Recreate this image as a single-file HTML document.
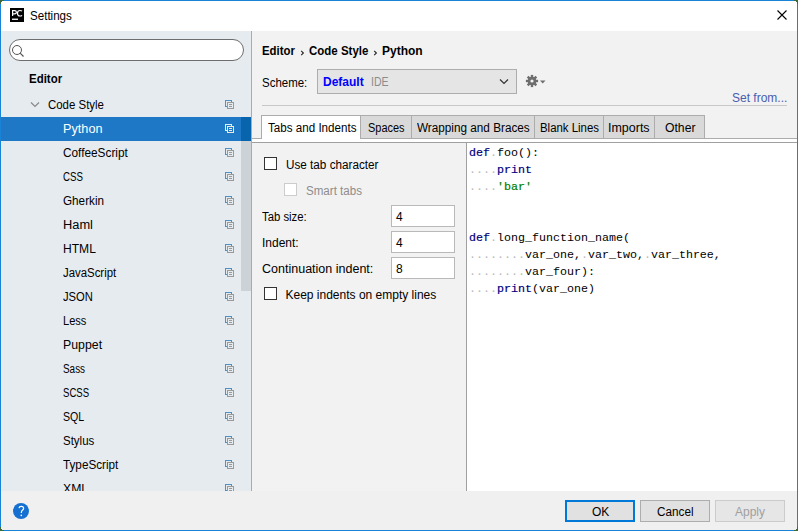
<!DOCTYPE html>
<html><head><meta charset="utf-8">
<style>
*{margin:0;padding:0;box-sizing:border-box}
html,body{width:798px;height:531px;overflow:hidden;background:#fff}
body{position:relative;font-family:"Liberation Sans",sans-serif;font-size:12px;color:#000}
.a{position:absolute;white-space:pre}
#win{position:absolute;left:0;top:0;width:798px;height:531px;border:1px solid #1883D7;background:#fff}
#side{position:absolute;left:1px;top:31px;width:250px;height:460px;background:#E6EBF0;overflow:hidden}
#divider{position:absolute;left:251px;top:31px;width:1px;height:460px;background:#ABABAB}
#right{position:absolute;left:252px;top:31px;width:545px;height:460px;background:#F2F2F2}
#bottom{position:absolute;left:1px;top:491px;width:796px;height:39px;background:#F0F0F0}
.row{position:absolute;left:0;width:250px;height:24px}
.row .t{position:absolute;left:62px;top:5px;white-space:pre}
.copy{position:absolute;left:223px;top:7px;width:11px;height:11px}
.btn{position:absolute;top:500px;height:22px;width:70px;border:1px solid #ADADAD;background:#E1E1E1}
.tab{position:absolute;top:115px;height:23px;border:1px solid #ACACAC;border-bottom:none;background:#D9D9D9}
.code{position:absolute;font-family:"Liberation Mono",monospace;font-size:11.67px;white-space:pre;color:#000}
.kw{color:#000080;-webkit-text-stroke:0.2px #000080}
.str{color:#008000;-webkit-text-stroke:0.2px #008000}
.dot{color:#B8B8B8}
.cb{position:absolute;width:13px;height:13px;border:1px solid #333;background:#fff}
.inp{position:absolute;left:391px;width:64px;height:22px;border:1px solid #B9B9B9;background:#fff}
</style></head><body>
<div id="win"></div>
<svg class="a" style="left:10px;top:8px" width="14" height="14" viewBox="0 0 14 14"><rect width="14" height="14" fill="#000"/><path d="M2.6 8V2.6H4.6Q6.4 2.6 6.4 4.2Q6.4 5.8 4.6 5.8H2.6" fill="none" stroke="#fff" stroke-width="1.2"/><path d="M12 3.2Q11.3 2.5 10 2.5Q7.5 2.5 7.5 5.2Q7.5 8 10 8Q11.3 8 12 7.3" fill="none" stroke="#fff" stroke-width="1.2"/><rect x="2" y="10.6" width="6" height="1.3" fill="#fff"/></svg>
<div class="a" style="left:30px;top:9px;transform:scaleX(0.9651);transform-origin:0 0;">Settings</div>
<svg class="a" style="left:776px;top:9px" width="14" height="14" viewBox="0 0 14 14"><path d="M1.5 1.5L10.5 10.5M10.5 1.5L1.5 10.5" stroke="#000" stroke-width="1.1"/></svg>

<div id="side">
  <div class="a" style="left:8px;top:8px;width:235px;height:22px;border:1px solid #6E6E6E;border-radius:11px;background:#fff"></div>
  <svg class="a" style="left:10px;top:13px" width="14" height="14" viewBox="0 0 14 14"><circle cx="6" cy="6" r="4.5" fill="none" stroke="#555" stroke-width="1"/><path d="M9.2 9.2L12.5 12.5" stroke="#555" stroke-width="1.2"/></svg>
  <div class="a" style="left:27.5px;top:41px;font-weight:bold;transform:scaleX(0.955);transform-origin:0 0">Editor</div>
  <div class="row" style="top:62px">
    <svg class="a" style="left:29px;top:8px" width="10" height="7" viewBox="0 0 10 7"><path d="M1 1.5L5 5.5L9 1.5" fill="none" stroke="#888" stroke-width="1.2"/></svg>
    <div class="t" style="left:46.5px;transform:scaleX(0.953);transform-origin:0 0">Code Style</div>
    <svg class="copy" viewBox="0 0 11 11"><rect x="1.5" y="0.5" width="6" height="6" fill="none" stroke="#4D90C4"/><rect x="3.5" y="2.5" width="6" height="6" fill="#E6EBF0" stroke="#9A9A9A"/><path d="M5 4.5h3M5 6.5h3" stroke="#9A9A9A"/></svg>
  </div>
  <div class="row" style="top:86px;background:#1E78C6;color:#fff">
    <div class="t" style="transform:scaleX(1.057);transform-origin:0 0">Python</div>
    <svg class="copy" viewBox="0 0 11 11"><rect x="1.5" y="0.5" width="6" height="6" fill="none" stroke="#D8F0FF"/><rect x="3.5" y="2.5" width="6" height="6" fill="#1E78C6" stroke="#F4E6DA"/><path d="M5 4.5h3M5 6.5h3" stroke="#F4E6DA"/></svg>
  </div>
  <div class="row" style="top:110px"><div class="t" style="left:61.8px;transform:scaleX(0.9846);transform-origin:0 0">CoffeeScript</div><svg class="copy" viewBox="0 0 11 11"><rect x="1.5" y="0.5" width="6" height="6" fill="none" stroke="#4D90C4"/><rect x="3.5" y="2.5" width="6" height="6" fill="#E6EBF0" stroke="#9A9A9A"/><path d="M5 4.5h3M5 6.5h3" stroke="#9A9A9A"/></svg></div>
  <div class="row" style="top:134px"><div class="t" style="left:61.8px;transform:scaleX(0.8083);transform-origin:0 0">CSS</div><svg class="copy" viewBox="0 0 11 11"><rect x="1.5" y="0.5" width="6" height="6" fill="none" stroke="#4D90C4"/><rect x="3.5" y="2.5" width="6" height="6" fill="#E6EBF0" stroke="#9A9A9A"/><path d="M5 4.5h3M5 6.5h3" stroke="#9A9A9A"/></svg></div>
  <div class="row" style="top:158px"><div class="t" style="left:61.8px;transform:scaleX(0.9756);transform-origin:0 0">Gherkin</div><svg class="copy" viewBox="0 0 11 11"><rect x="1.5" y="0.5" width="6" height="6" fill="none" stroke="#4D90C4"/><rect x="3.5" y="2.5" width="6" height="6" fill="#E6EBF0" stroke="#9A9A9A"/><path d="M5 4.5h3M5 6.5h3" stroke="#9A9A9A"/></svg></div>
  <div class="row" style="top:182px"><div class="t" style="left:61.8px;transform:scaleX(1.0692);transform-origin:0 0">Haml</div><svg class="copy" viewBox="0 0 11 11"><rect x="1.5" y="0.5" width="6" height="6" fill="none" stroke="#4D90C4"/><rect x="3.5" y="2.5" width="6" height="6" fill="#E6EBF0" stroke="#9A9A9A"/><path d="M5 4.5h3M5 6.5h3" stroke="#9A9A9A"/></svg></div>
  <div class="row" style="top:206px"><div class="t" style="left:61.8px;transform:scaleX(1.0065);transform-origin:0 0">HTML</div><svg class="copy" viewBox="0 0 11 11"><rect x="1.5" y="0.5" width="6" height="6" fill="none" stroke="#4D90C4"/><rect x="3.5" y="2.5" width="6" height="6" fill="#E6EBF0" stroke="#9A9A9A"/><path d="M5 4.5h3M5 6.5h3" stroke="#9A9A9A"/></svg></div>
  <div class="row" style="top:230px"><div class="t" style="left:61.8px;transform:scaleX(0.9491);transform-origin:0 0">JavaScript</div><svg class="copy" viewBox="0 0 11 11"><rect x="1.5" y="0.5" width="6" height="6" fill="none" stroke="#4D90C4"/><rect x="3.5" y="2.5" width="6" height="6" fill="#E6EBF0" stroke="#9A9A9A"/><path d="M5 4.5h3M5 6.5h3" stroke="#9A9A9A"/></svg></div>
  <div class="row" style="top:254px"><div class="t" style="left:61.8px;transform:scaleX(0.9333);transform-origin:0 0">JSON</div><svg class="copy" viewBox="0 0 11 11"><rect x="1.5" y="0.5" width="6" height="6" fill="none" stroke="#4D90C4"/><rect x="3.5" y="2.5" width="6" height="6" fill="#E6EBF0" stroke="#9A9A9A"/><path d="M5 4.5h3M5 6.5h3" stroke="#9A9A9A"/></svg></div>
  <div class="row" style="top:278px"><div class="t" style="left:61.8px;transform:scaleX(0.9217);transform-origin:0 0">Less</div><svg class="copy" viewBox="0 0 11 11"><rect x="1.5" y="0.5" width="6" height="6" fill="none" stroke="#4D90C4"/><rect x="3.5" y="2.5" width="6" height="6" fill="#E6EBF0" stroke="#9A9A9A"/><path d="M5 4.5h3M5 6.5h3" stroke="#9A9A9A"/></svg></div>
  <div class="row" style="top:302px"><div class="t" style="left:61.8px;transform:scaleX(1.0278);transform-origin:0 0">Puppet</div><svg class="copy" viewBox="0 0 11 11"><rect x="1.5" y="0.5" width="6" height="6" fill="none" stroke="#4D90C4"/><rect x="3.5" y="2.5" width="6" height="6" fill="#E6EBF0" stroke="#9A9A9A"/><path d="M5 4.5h3M5 6.5h3" stroke="#9A9A9A"/></svg></div>
  <div class="row" style="top:326px"><div class="t" style="left:61.8px;transform:scaleX(0.8269);transform-origin:0 0">Sass</div><svg class="copy" viewBox="0 0 11 11"><rect x="1.5" y="0.5" width="6" height="6" fill="none" stroke="#4D90C4"/><rect x="3.5" y="2.5" width="6" height="6" fill="#E6EBF0" stroke="#9A9A9A"/><path d="M5 4.5h3M5 6.5h3" stroke="#9A9A9A"/></svg></div>
  <div class="row" style="top:350px"><div class="t" style="left:61.8px;transform:scaleX(0.8000);transform-origin:0 0">SCSS</div><svg class="copy" viewBox="0 0 11 11"><rect x="1.5" y="0.5" width="6" height="6" fill="none" stroke="#4D90C4"/><rect x="3.5" y="2.5" width="6" height="6" fill="#E6EBF0" stroke="#9A9A9A"/><path d="M5 4.5h3M5 6.5h3" stroke="#9A9A9A"/></svg></div>
  <div class="row" style="top:374px"><div class="t" style="left:61.8px;transform:scaleX(0.8826);transform-origin:0 0">SQL</div><svg class="copy" viewBox="0 0 11 11"><rect x="1.5" y="0.5" width="6" height="6" fill="none" stroke="#4D90C4"/><rect x="3.5" y="2.5" width="6" height="6" fill="#E6EBF0" stroke="#9A9A9A"/><path d="M5 4.5h3M5 6.5h3" stroke="#9A9A9A"/></svg></div>
  <div class="row" style="top:398px"><div class="t" style="left:61.8px;transform:scaleX(0.9563);transform-origin:0 0">Stylus</div><svg class="copy" viewBox="0 0 11 11"><rect x="1.5" y="0.5" width="6" height="6" fill="none" stroke="#4D90C4"/><rect x="3.5" y="2.5" width="6" height="6" fill="#E6EBF0" stroke="#9A9A9A"/><path d="M5 4.5h3M5 6.5h3" stroke="#9A9A9A"/></svg></div>
  <div class="row" style="top:422px"><div class="t" style="left:61.8px;transform:scaleX(0.9768);transform-origin:0 0">TypeScript</div><svg class="copy" viewBox="0 0 11 11"><rect x="1.5" y="0.5" width="6" height="6" fill="none" stroke="#4D90C4"/><rect x="3.5" y="2.5" width="6" height="6" fill="#E6EBF0" stroke="#9A9A9A"/><path d="M5 4.5h3M5 6.5h3" stroke="#9A9A9A"/></svg></div>
  <div class="row" style="top:446px"><div class="t" style="left:61.8px;transform:scaleX(1.0200);transform-origin:0 0">XML</div><svg class="copy" viewBox="0 0 11 11"><rect x="1.5" y="0.5" width="6" height="6" fill="none" stroke="#4D90C4"/><rect x="3.5" y="2.5" width="6" height="6" fill="#E6EBF0" stroke="#9A9A9A"/><path d="M5 4.5h3M5 6.5h3" stroke="#9A9A9A"/></svg></div>
  <div class="a" style="left:240px;top:86px;width:10px;height:174px;background:#CDD2D7"></div>
  <div class="a" style="left:240px;top:86px;width:10px;height:24px;background:#0864AC"></div>
</div>
<div id="divider"></div>

<div id="right"></div>
<div class="a" style="left:262px;top:44px;transform:scaleX(0.9471);transform-origin:0 0;font-weight:bold">Editor</div>
<svg class="a" style="left:300px;top:49.5px" width="5" height="6" viewBox="0 0 5 6"><path d="M1.2 0.8L3.4 3L1.2 5.2" fill="none" stroke="#222" stroke-width="1.1"/></svg>
<div class="a" style="left:309px;top:44px;transform:scaleX(0.9576);transform-origin:0 0;font-weight:bold">Code Style</div>
<svg class="a" style="left:372.5px;top:49.5px" width="5" height="6" viewBox="0 0 5 6"><path d="M1.2 0.8L3.4 3L1.2 5.2" fill="none" stroke="#222" stroke-width="1.1"/></svg>
<div class="a" style="left:382px;top:44px;font-weight:bold">Python</div>
<div class="a" style="left:262px;top:76px;transform:scaleX(0.9565);transform-origin:0 0;">Scheme:</div>
<div class="a" style="left:317px;top:69px;width:200px;height:25px;border:1px solid #ADADAD;background:#E5E5E5"></div>
<div class="a" style="left:323px;top:75px;font-weight:bold;color:#0000FF">Default</div>
<div class="a" style="left:371px;top:75px;transform:scaleX(0.8777);transform-origin:0 0;color:#8C8C8C">IDE</div>
<svg class="a" style="left:499px;top:78px" width="10" height="7" viewBox="0 0 10 7"><path d="M1 1.5L5 5.5L9 1.5" fill="none" stroke="#333" stroke-width="1.2"/></svg>
<svg class="a" style="left:525px;top:74px" width="14" height="14" viewBox="0 0 14 14"><rect x="5.8" y="0.9" width="2.4" height="3" fill="#6E6E6E" transform="rotate(0 7 7)"/><rect x="5.8" y="0.9" width="2.4" height="3" fill="#6E6E6E" transform="rotate(45 7 7)"/><rect x="5.8" y="0.9" width="2.4" height="3" fill="#6E6E6E" transform="rotate(90 7 7)"/><rect x="5.8" y="0.9" width="2.4" height="3" fill="#6E6E6E" transform="rotate(135 7 7)"/><rect x="5.8" y="0.9" width="2.4" height="3" fill="#6E6E6E" transform="rotate(180 7 7)"/><rect x="5.8" y="0.9" width="2.4" height="3" fill="#6E6E6E" transform="rotate(225 7 7)"/><rect x="5.8" y="0.9" width="2.4" height="3" fill="#6E6E6E" transform="rotate(270 7 7)"/><rect x="5.8" y="0.9" width="2.4" height="3" fill="#6E6E6E" transform="rotate(315 7 7)"/><circle cx="7" cy="7" r="4.3" fill="#6E6E6E"/><circle cx="7" cy="7" r="1.6" fill="#F2F2F2"/></svg>
<svg class="a" style="left:540px;top:80px" width="6" height="4" viewBox="0 0 6 4"><path d="M0 0.5h5.5L2.75 3.5z" fill="#6E6E6E"/></svg>
<div class="a" style="left:732px;top:91px;color:#4A5DAE">Set from...</div>
<div class="a" style="left:262px;top:105px;width:525px;height:1px;background:#C8C8C8"></div>

<div class="a" style="left:252px;top:138px;width:545px;height:1px;background:#ACACAC"></div>
<div class="a" style="left:252px;top:139px;width:545px;height:3px;background:#fff"></div>
<div class="a" style="left:252px;top:142px;width:545px;height:1px;background:#A0A0A0"></div>
<div class="tab" style="left:360px;width:52px"></div>
<div class="a" style="left:368px;top:121px;transform:scaleX(0.9118);transform-origin:0 0;">Spaces</div>
<div class="tab" style="left:411px;width:124px"></div>
<div class="a" style="left:417px;top:121px;transform:scaleX(0.9784);transform-origin:0 0;">Wrapping and Braces</div>
<div class="tab" style="left:534px;width:70px"></div>
<div class="a" style="left:539.5px;top:121px;transform:scaleX(0.9508);transform-origin:0 0;">Blank Lines</div>
<div class="tab" style="left:603px;width:52px"></div>
<div class="a" style="left:608px;top:121px;transform:scaleX(1.0395);transform-origin:0 0;">Imports</div>
<div class="tab" style="left:654px;width:51px"></div>
<div class="a" style="left:664.5px;top:121px;transform:scaleX(1.0160);transform-origin:0 0;">Other</div>
<div class="a" style="left:261px;top:115px;width:99px;height:24px;background:#fff;border:1px solid #ACACAC;border-bottom:none;border-right:none"></div>
<div class="a" style="left:267.5px;top:121px;transform:scaleX(0.9682);transform-origin:0 0;">Tabs and Indents</div>

<div class="cb" style="left:264px;top:157px"></div>
<div class="a" style="left:286px;top:158px;transform:scaleX(0.9763);transform-origin:0 0;">Use tab character</div>
<div class="cb" style="left:284px;top:183px;border-color:#CCCCCC;background:#fff"></div>
<div class="a" style="left:306px;top:184px;transform:scaleX(0.9649);transform-origin:0 0;color:#8D8D8D">Smart tabs</div>
<div class="a" style="left:262px;top:210px;transform:scaleX(0.9435);transform-origin:0 0;">Tab size:</div>
<div class="inp" style="top:205px"></div><div class="a" style="left:396px;top:210px">4</div>
<div class="a" style="left:262px;top:236px">Indent:</div>
<div class="inp" style="top:231px"></div><div class="a" style="left:396px;top:236px">4</div>
<div class="a" style="left:262px;top:262px;transform:scaleX(1.0429);transform-origin:0 0;">Continuation indent:</div>
<div class="inp" style="top:257px"></div><div class="a" style="left:396px;top:262px">8</div>
<div class="cb" style="left:264px;top:287px"></div>
<div class="a" style="left:285.5px;top:288px">Keep indents on empty lines</div>

<div class="a" style="left:466px;top:143px;width:1px;height:348px;background:#A0A0A0"></div>
<div class="a" style="left:467px;top:143px;width:330px;height:348px;background:#fff"></div>
<div class="code" style="left:469px;top:146px"><span class="kw">def</span><span class="dot">.</span>foo():</div>
<div class="code" style="left:469px;top:163px"><span class="dot">....</span><span class="kw">print</span></div>
<div class="code" style="left:469px;top:180px"><span class="dot">....</span><span class="str">'bar'</span></div>
<div class="code" style="left:469px;top:231px"><span class="kw">def</span><span class="dot">.</span>long_function_name(</div>
<div class="code" style="left:469px;top:248px"><span class="dot">........</span>var_one,<span class="dot">.</span>var_two,<span class="dot">.</span>var_three,</div>
<div class="code" style="left:469px;top:265px"><span class="dot">........</span>var_four):</div>
<div class="code" style="left:469px;top:282px"><span class="dot">....</span><span class="kw">print</span>(var_one)</div>

<div id="bottom"></div>
<svg class="a" style="left:13px;top:503px" width="16" height="16" viewBox="0 0 16 16"><circle cx="8" cy="8" r="8" fill="#1570D2"/><path d="M6 5.2Q6.3 3.3 8.3 3.3Q10.6 3.3 10.6 5.3Q10.6 6.5 9.4 7.3Q8.3 8.1 8.3 9.9" fill="none" stroke="#fff" stroke-width="1.2"/><circle cx="8.3" cy="12.4" r="0.8" fill="#fff"/></svg>
<div class="btn" style="left:565px;border:2px solid #0078D7"></div>
<div class="a" style="left:592px;top:505px">OK</div>
<div class="btn" style="left:640px"></div>
<div class="a" style="left:657px;top:505px;transform:scaleX(0.9778);transform-origin:0 0;">Cancel</div>
<div class="btn" style="left:715px;border-color:#CCCCCC;background:#E6E6E6"></div>
<div class="a" style="left:735px;top:505px;color:#A0A0A0">Apply</div>
<svg class="a" style="left:0;top:0" width="798" height="531" viewBox="0 0 798 531"><g fill="#3D6B3D"><path d="M0 0h4v1h-2v1h-1v2h-1z"/><path d="M798 0h-4v1h2v1h1v2h1z"/><path d="M0 531h4v-1h-2v-1h-1v-2h-1z"/><path d="M798 531h-4v-1h2v-1h1v-2h1z"/></g></svg>
</body></html>
